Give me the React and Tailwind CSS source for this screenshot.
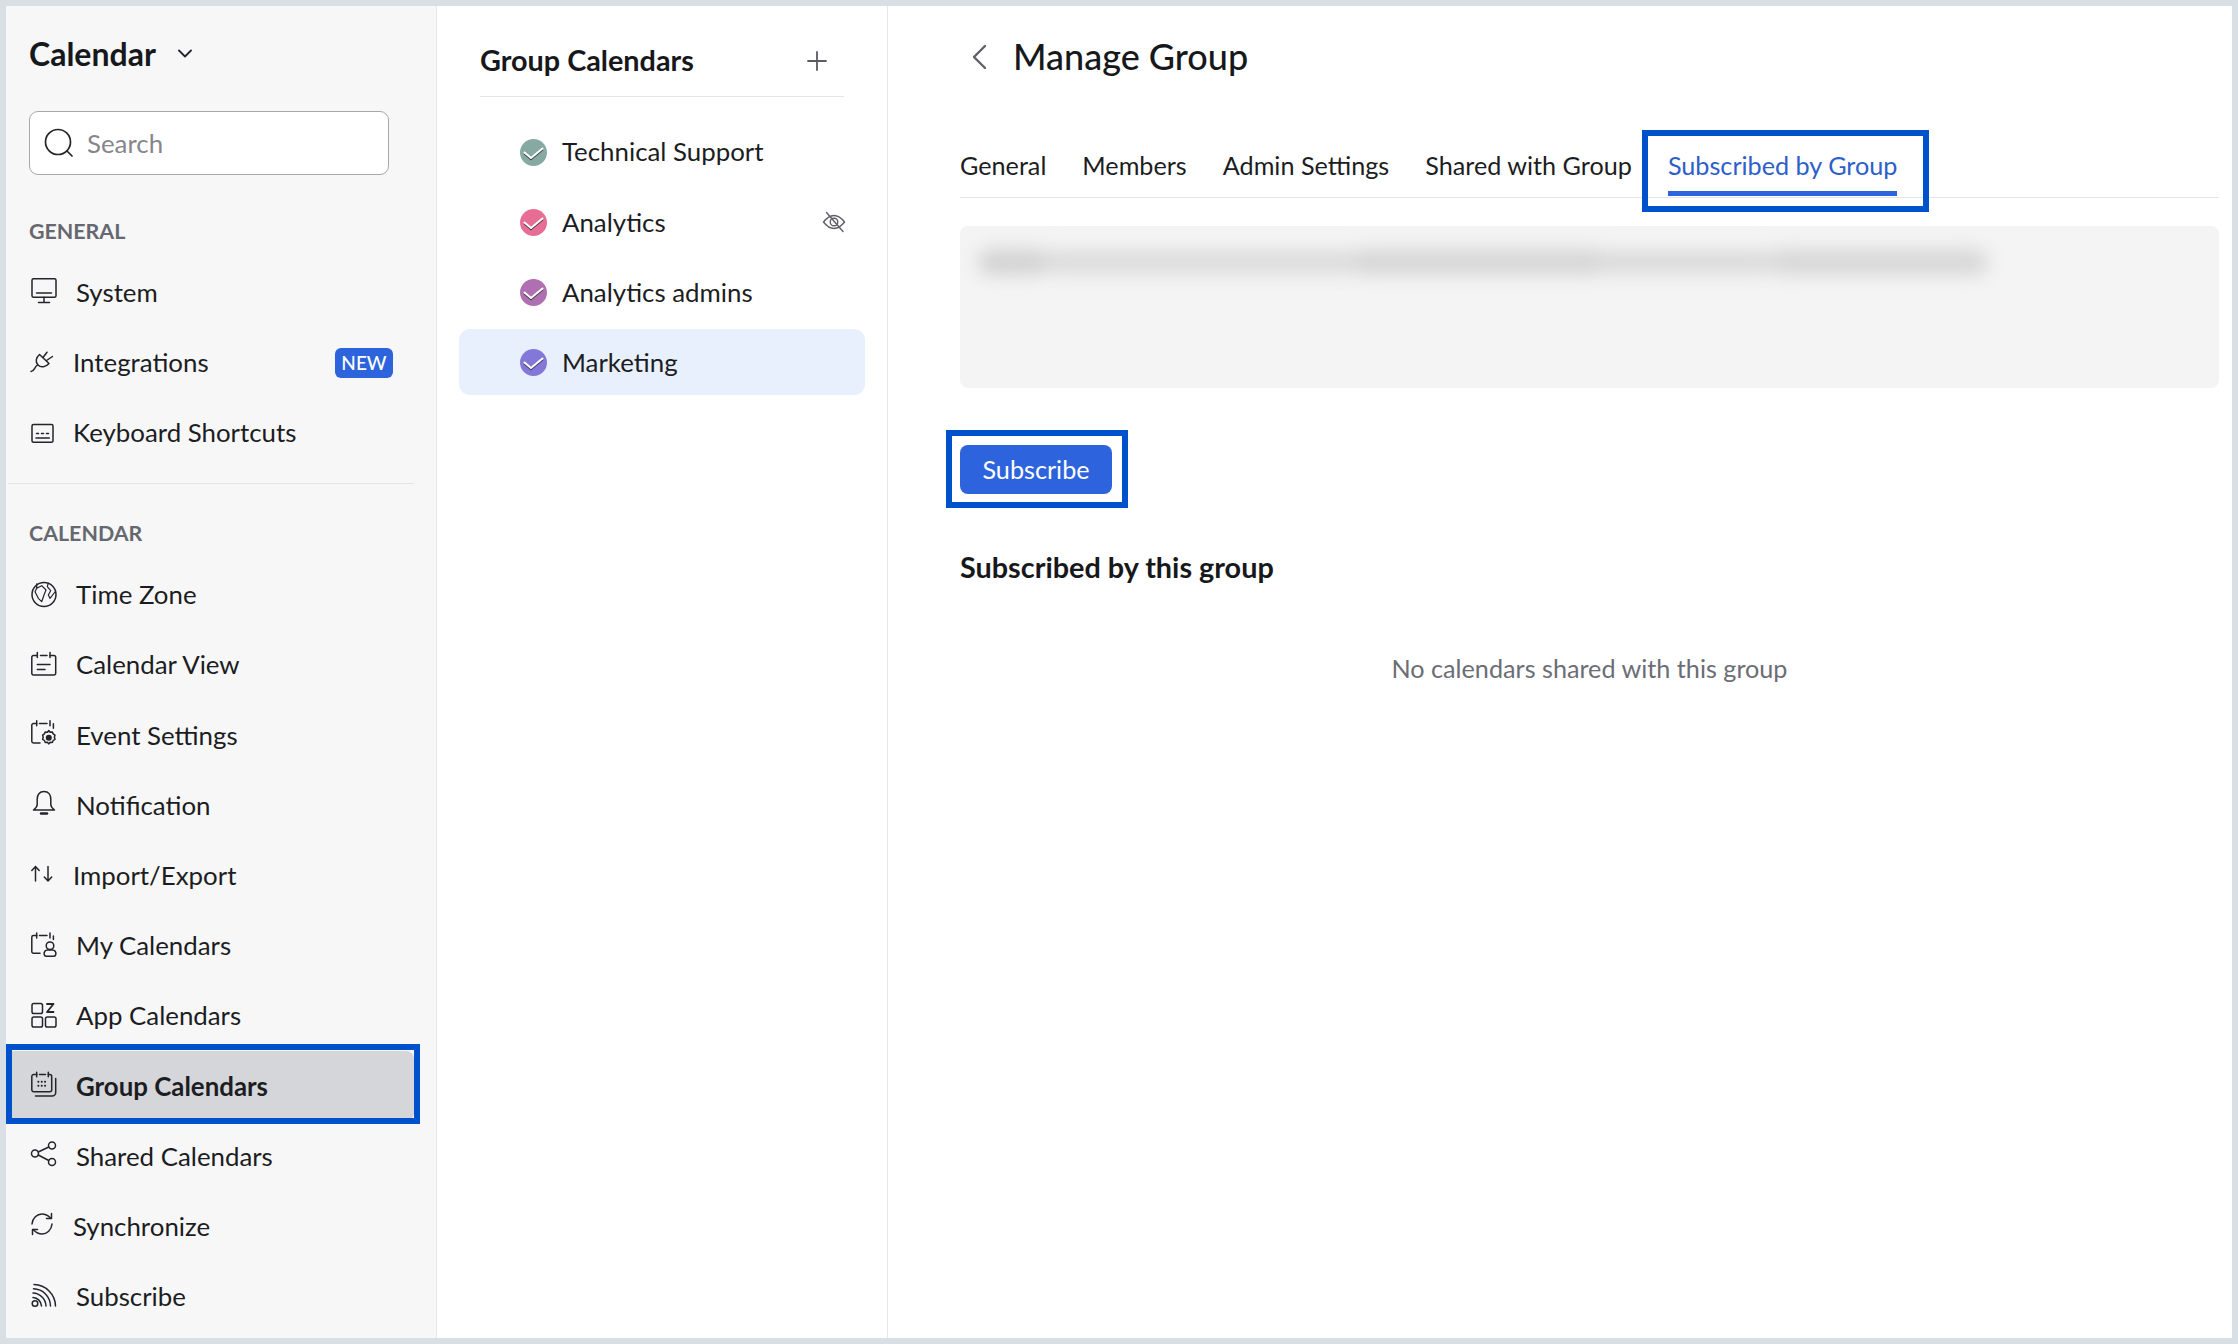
import React from "react";

const Svg = ({ children, className = "" }) => (
  <svg viewBox="0 0 26 26" fill="none" stroke="currentColor" strokeWidth="1.5" strokeLinecap="round" strokeLinejoin="round" className={`w-[26px] h-[26px] shrink-0 overflow-visible text-[#24252b] ${className}`}>
    {children}
  </svg>
);

const Icons = {
  monitor: <Svg className="-translate-y-[2px]"><rect x="1" y="0.8" width="24" height="18.400" rx="1.500" /><path d="M5.500 15h15M13 19.200V24.500M7.500 24.500h11" /></Svg>,
  plug: <Svg><path d="M0 21.500c3.500 0 3-4 6.500-6.500" /><path d="M8.500 4.500L18 13.500c-3 3.500-8 4.500-11 1.500C4 12 5 7.500 8.500 4.500z" /><path d="M12 7.500L16 2.200M15.500 10.500L21.500 6.500" /></Svg>,
  keyboard: <Svg><rect x="1" y="4.600" width="21" height="17.700" rx="1.500" /><path d="M5 18h13.300" /><path d="M5.500 13.600h2M10.500 13.600h2M15.500 13.600h2" /></Svg>,
  globe: <Svg><circle cx="13" cy="12.500" r="12" /><path d="M5.700 1.800L5.700 6.300L10.700 3.700L15 8L13 13L10.700 19.700L7.300 16.300L4 9.700L5.700 6.300" strokeWidth="1.200" /><path d="M17.300 1L16.300 4.700L19.700 8.700L17.300 13L19 16.300L24 10" strokeWidth="1.200" /></Svg>,
  calView: <Svg><path d="M6.300 3.500H2.500A1.700 1.700 0 0 0 0.800 5.200V21.300A1.700 1.700 0 0 0 2.500 23h20.500A1.700 1.700 0 0 0 24.700 21.300V5.200A1.700 1.700 0 0 0 23 3.500H19" /><path d="M6.300 0.500v5M19 0.500v5M9.500 3.500h6.500" /><path d="M6.300 12.500H19M6.300 17.500H14" /></Svg>,
  calGear: <Svg><g transform="translate(0,-1.700)"><path d="M5.700 3.200H2.500A1.700 1.700 0 0 0 0.800 4.900V21A1.700 1.700 0 0 0 2.500 22.700H9" /><path d="M5.700 0.500v5M19 0.500v5M8.500 3.200h7.500M22.400 3.500V8" /></g><path d="M17.800 8.500l1.300 1.700 2.200-.3.900 2 1.800 1.200-.6 2.100.6 2.100-1.800 1.200-.9 2-2.200-.3-1.300 1.700-1.300-1.700-2.200.3-.9-2-1.800-1.200.6-2.100-.6-2.100 1.800-1.200.9-2 2.200.3z" /><circle cx="17.800" cy="15.700" r="2.300" fill="currentColor" /></Svg>,
  bell: <Svg className="-translate-y-[2px]"><path d="M13 1.500c-4.600 0-6.800 3.400-6.800 7.500v5.500c0 2.200-1.700 4-3.700 5.500h21c-2-1.500-3.700-3.300-3.700-5.500V9c0-4.100-2.200-7.500-6.800-7.500z" /><path d="M10 23.500h6" strokeWidth="2.500" /></Svg>,
  arrows: <Svg><path d="M4.500 19V4.500M0.800 8.500L4.500 4.500L8.200 8.500" /><path d="M17 4.500V19M13.300 15L17 19L20.700 15" /></Svg>,
  calUser: <Svg><path d="M5.700 2.500H2.500A1.700 1.700 0 0 0 0.800 4.200V18.500A1.700 1.700 0 0 0 2.500 20.200H9" /><path d="M5.700 0v5M19 0v5M8.500 2.500h7.500M22.400 3V6.500" /><circle cx="19" cy="12.800" r="3.800" /><path d="M13.200 21.500c-.5-2.500 1-4.500 3.300-4.500h5c2.300 0 3.800 2 3.300 4.500-.2 1.100-1 1.700-2 1.700h-7.600c-1 0-1.800-.6-2-1.700z" /></Svg>,
  apps: <Svg><rect x="1" y="0.500" width="10.500" height="10" rx="1.800" /><rect x="1" y="14" width="10.500" height="10" rx="1.800" /><rect x="14.500" y="14" width="10.500" height="10" rx="1.800" /><path d="M16 1h6.500L16 9h6.500" strokeWidth="1.800" /></Svg>,
  group: <Svg><path d="M5.700 1.500H2.800A2 2 0 0 0 0.800 3.500V16.700A2 2 0 0 0 2.800 18.700H18.700A2 2 0 0 0 20.700 16.700V3.500A2 2 0 0 0 18.700 1.500H17.300" /><path d="M5.700 -0.800v4.500M17.300 -0.800v4.500M8.500 1.500h6" /><path d="M24.700 5.500V19.500A3.500 3.500 0 0 1 21.200 23H4.500" /><path d="M7.300 8.700h.1M10.700 8.700h.1M14 8.700h.1M7.300 12.700h.1M10.700 12.700h.1M14 12.700h.1" strokeWidth="2" /></Svg>,
  share: <Svg><circle cx="4" cy="10.500" r="3.500" /><circle cx="21" cy="2.500" r="3.500" /><circle cx="21" cy="19" r="3.500" /><path d="M7.200 9L17.800 4M7.200 12L17.800 17.500" /></Svg>,
  sync: <Svg><path d="M1 11C1.500 5 6 1 11 1C14.500 1 17 2.500 19.500 5" /><path d="M20.500 0.500V5.500H15.500" /><path d="M21 11C20.500 17 16 21 11 21C7.500 21 5 19.500 2.500 17" /><path d="M1.500 21.500V16.500H6.500" /></Svg>,
  rss: <Svg><circle cx="4" cy="19.500" r="2.800" /><path d="M2 13.500A9 9 0 0 1 10.500 22" /><path d="M2 9A13.500 13.500 0 0 1 15 22" /><path d="M2.500 4.800A17.500 17.500 0 0 1 19.500 22" /><path d="M3 0.500A22 22 0 0 1 24.500 22" /></Svg>,
};

const NavItem = ({ icon, label, gap = "ml-[19px]", active, children, lift = "-mt-[2px]" }) => (
  <div className={`relative flex items-center h-[70.200px] w-[402px] mx-[6px] pl-[19px] ${active ? "bg-[#d5d6da] rounded-tr-lg rounded-br-lg font-bold" : ""}`}>
    {Icons[icon]}
    <span className={`${gap} ${lift}`}>{label}</span>
    {children}
  </div>
);

const Check = ({ color }) => (
  <svg viewBox="0 0 27 27" className="w-[27px] h-[27px] shrink-0">
    <circle cx="13.500" cy="13.500" r="13.500" fill={color} />
    <path d="M4.500 15L11 20.500L22.500 11" fill="none" stroke="#3a3a48" strokeWidth="1.500" strokeLinecap="round" strokeLinejoin="round" />
    <path d="M4.500 13.500L11 19L22.500 9.500" fill="none" stroke="#ffffff" strokeWidth="2" strokeLinecap="round" strokeLinejoin="round" />
  </svg>
);

const Overlay = ({ className }) => (
  <div className={`absolute border-[6px] border-[#0052cc] pointer-events-none ${className}`} />
);

const Section = ({ children, className }) => (
  <div className={`h-[24px] ml-[23px] flex items-center text-[21.400px] font-bold text-[#666870] ${className}`}>{children}</div>
);

export default function App() {
  return (
    <div className="w-[2238px] h-[1344px] bg-[#d8e0e6] p-[6px] flex overflow-hidden text-[25.850px] text-[#1c1d22] font-['Lato',sans-serif]">
      {/* Sidebar */}
      <aside className="w-[431px] h-full shrink-0 bg-[#f7f7f8] border-r border-[#e3e6ea]">
        <div className="pt-[24px] pl-[23px] h-[72px] flex items-center gap-[22px]">
          <span className="text-[32px] font-bold leading-[48px] text-[#17181c]">Calendar</span>
          <svg viewBox="0 0 14 10" className="w-[14px] h-[10px] text-[#24252b]" fill="none" stroke="currentColor" strokeWidth="1.800" strokeLinecap="round" strokeLinejoin="round"><path d="M1 1.500l6 6 6-6" /></svg>
        </div>
        <div className="mt-[33px] ml-[23px] w-[360px] h-[64px] bg-white border border-[#a8a8ac] rounded-[9px] flex items-center pl-[14px]">
          <svg viewBox="0 0 30 30" className="w-[30px] h-[30px] text-[#24252b]" fill="none" stroke="currentColor" strokeWidth="1.700" strokeLinecap="round"><circle cx="14" cy="14" r="12.500" /><path d="M23 23l5 5" /></svg>
          <span className="ml-[13px] text-[#85868b]">Search</span>
        </div>
        <Section className="mt-[44px]">GENERAL</Section>
        <div className="mt-[15px]">
          <NavItem icon="monitor" label="System" />
          <NavItem icon="plug" label="Integrations" gap="ml-[16px]">
            <span className="ml-auto mr-[21px] w-[58px] h-[30px] rounded-[6px] bg-[#2d64dd] text-white text-[19px] flex items-center justify-center font-medium">NEW</span>
          </NavItem>
          <NavItem icon="keyboard" label="Keyboard Shortcuts" gap="ml-[16px]" />
        </div>
        <div className="mt-[14px] ml-[2px] w-[406px] h-px bg-[#e3e5e9]" />
        <Section className="mt-[37px]">CALENDAR</Section>
        <div className="mt-[15px]">
          <NavItem icon="globe" label="Time Zone" lift="mt-0" />
          <NavItem icon="calView" label="Calendar View" lift="mt-0" />
          <NavItem icon="calGear" label="Event Settings" lift="mt-0" />
          <NavItem icon="bell" label="Notification" lift="mt-0" />
          <NavItem icon="arrows" label="Import/Export" gap="ml-[16px]" lift="mt-0" />
          <NavItem icon="calUser" label="My Calendars" lift="mt-0" />
          <NavItem icon="apps" label="App Calendars" lift="mt-0" />
          <NavItem icon="group" label="Group Calendars" active lift="mt-0">
            <Overlay className="-left-[6px] -right-[6px] -top-[7px] -bottom-[3px]" />
          </NavItem>
          <NavItem icon="share" label="Shared Calendars" lift="mt-0" />
          <NavItem icon="sync" label="Synchronize" gap="ml-[16px]" lift="mt-0" />
          <NavItem icon="rss" label="Subscribe" lift="mt-0" />
        </div>
      </aside>

      {/* Group list */}
      <section className="w-[451px] h-full shrink-0 bg-white border-r border-[#e7e8ea]">
        <div className="ml-[43px] w-[364px] h-[91px] pt-[19px] flex items-center justify-between border-b border-[#e4e5e8]">
          <span className="font-bold text-[28.800px] text-[#17181c]">Group Calendars</span>
          <svg viewBox="0 0 20 20" className="w-[20px] h-[20px] mr-[17px] text-[#5a5b63]" fill="none" stroke="currentColor" strokeWidth="1.800" strokeLinecap="round"><path d="M10 1v18M1 10h18" /></svg>
        </div>
        <div className="mt-[22px] mx-[22px] flex flex-col gap-[4px]">
          {[
            ["Technical Support", "#86aaa3", "-mt-[2px]"],
            ["Analytics", "#e76d95", "mt-0"],
            ["Analytics admins", "#b06fb0", "mt-0"],
            ["Marketing", "#8377d8", "mt-0"],
          ].map(([name, color, lift]) => (
            <div key={name} className={`h-[66px] pl-[61px] flex items-center rounded-[11px] ${name === "Marketing" ? "bg-[#e8f0fd]" : ""}`}>
              <Check color={color} />
              <span className={`ml-[15px] ${lift}`}>{name}</span>
              {name === "Analytics" && (
                <svg viewBox="0 0 24 24" className="w-[24px] h-[24px] ml-auto mr-[19px] text-[#5f6068]" fill="none" stroke="currentColor" strokeWidth="1.400" strokeLinecap="round" strokeLinejoin="round">
                  <path d="M1.500 12C5 7.500 8.500 5.500 12 5.500S19 7.500 22.500 12C19 16.500 15.500 18.500 12 18.500S5 16.500 1.500 12z" />
                  <circle cx="12" cy="12" r="3.800" />
                  <path d="M4.500 2.500l16.500 19" />
                </svg>
              )}
            </div>
          ))}
        </div>
      </section>

      {/* Main */}
      <main className="flex-1 h-full bg-white pl-[72px] pr-[13px] text-[25.200px]">
        <div className="mt-[25px] h-[50px] flex items-center text-[36px] font-medium text-[#17181c]">
          <svg viewBox="0 0 18 26" className="ml-[10px] w-[18px] h-[26px] translate-y-[1px] text-[#5f6068]" fill="none" stroke="currentColor" strokeWidth="2.400" strokeLinecap="round" strokeLinejoin="round"><path d="M15 2L4 13l11 11" /></svg>
          <span className="ml-[25px]">Manage Group</span>
        </div>
        <div className="mt-[49px] h-[68px] flex gap-9 border-b border-[#e4e5e8]">
          <div className="h-[67px] pt-[17px] leading-[36px]">General</div>
          <div className="h-[67px] pt-[17px] leading-[36px]">Members</div>
          <div className="h-[67px] pt-[17px] leading-[36px]">Admin Settings</div>
          <div className="h-[67px] pt-[17px] leading-[36px]">Shared with Group</div>
          <div className="relative h-[67px] pt-[17px] leading-[36px] text-[#2d5ec9]">
            Subscribed by Group
            <div className="absolute left-0 right-0 bottom-[1px] h-[5px] bg-[#2d64dd]" />
            <Overlay className="-left-[26px] -right-[32px] top-0 -bottom-[15px]" />
          </div>
        </div>
        <div className="mt-[28px] h-[162px] bg-[#f4f4f4] rounded-[8px] pt-[14px] pl-[18px] overflow-hidden">
          <div className="h-[44px] w-[1010px] flex items-center blur-[9px]">
            <div className="h-[26px] w-[70px] bg-[#d2d2d2] rounded-full" />
            <div className="h-[22px] w-[310px] bg-[#dadada]" />
            <div className="h-[26px] w-[240px] bg-[#d6d6d6]" />
            <div className="h-[22px] w-[170px] bg-[#d9d9d9]" />
            <div className="h-[26px] w-[220px] bg-[#d7d7d7] rounded-full" />
          </div>
        </div>
        <div className="relative mt-[57px] w-[152px] h-[49px] rounded-[8px] bg-[#2d64dd] text-white flex items-center justify-center">
          Subscribe
          <Overlay className="-left-[14px] -right-[16px] -top-[15px] -bottom-[14px]" />
        </div>
        <div className="mt-[55px] h-[36px] leading-[36px] font-bold text-[28.800px] text-[#17181c]">Subscribed by this group</div>
        <div className="mt-[65px] h-[36px] leading-[36px] text-center text-[#6b6d75]">No calendars shared with this group</div>
      </main>
    </div>
  );
}
